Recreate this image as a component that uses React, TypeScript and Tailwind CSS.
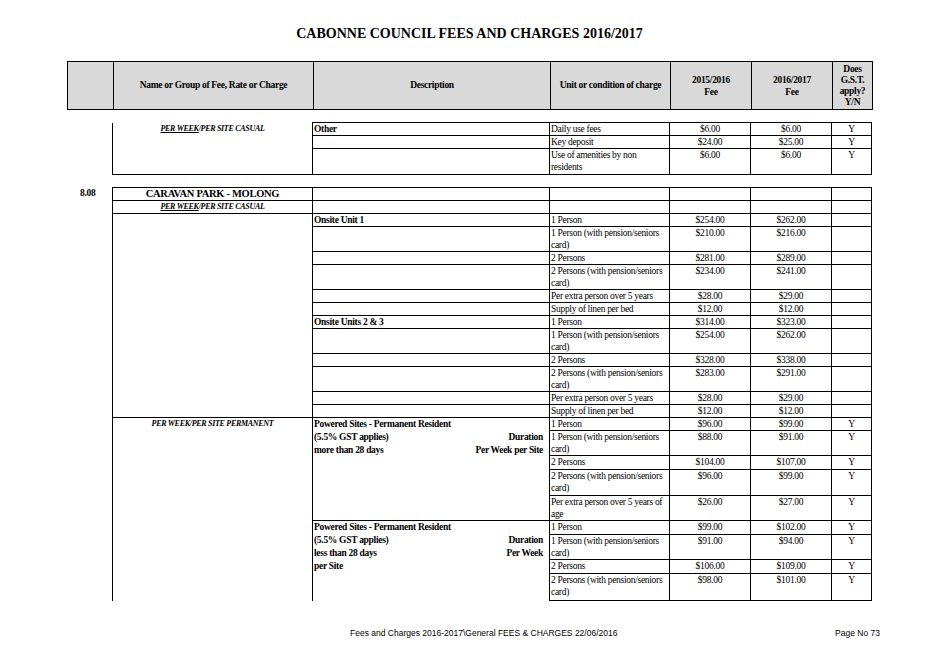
import React from 'react';

const td = 'border border-black px-[1px] align-top leading-[12px] overflow-hidden';
const fee = 'border border-black text-center align-top leading-[12px]';

type R = { d?: string; u: string; a: string; b: string; y?: string; h?: number };

const casual: R[] = [
	{ d: 'Onsite Unit 1', u: '1 Person', a: '$254.00', b: '$262.00' },
	{ u: '1 Person (with pension/seniors card)', a: '$210.00', b: '$216.00', h: 24 },
	{ u: '2 Persons', a: '$281.00', b: '$289.00' },
	{ u: '2 Persons (with pension/seniors card)', a: '$234.00', b: '$241.00', h: 24 },
	{ u: 'Per extra person over 5 years', a: '$28.00', b: '$29.00' },
	{ u: 'Supply of linen per bed', a: '$12.00', b: '$12.00' },
	{ d: 'Onsite Units 2 & 3', u: '1 Person', a: '$314.00', b: '$323.00' },
	{ u: '1 Person (with pension/seniors card)', a: '$254.00', b: '$262.00', h: 24 },
	{ u: '2 Persons', a: '$328.00', b: '$338.00' },
	{ u: '2 Persons (with pension/seniors card)', a: '$283.00', b: '$291.00', h: 24 },
	{ u: 'Per extra person over 5 years', a: '$28.00', b: '$29.00' },
	{ u: 'Supply of linen per bed', a: '$12.00', b: '$12.00' },
];

const perm1: R[] = [
	{ u: '1 Person', a: '$96.00', b: '$99.00', y: 'Y' },
	{ u: '1 Person (with pension/seniors card)', a: '$88.00', b: '$91.00', y: 'Y', h: 24 },
	{ u: '2 Persons', a: '$104.00', b: '$107.00', y: 'Y', h: 14 },
	{ u: '2 Persons (with pension/seniors card)', a: '$96.00', b: '$99.00', y: 'Y', h: 26 },
	{ u: 'Per extra person over 5 years of age', a: '$26.00', b: '$27.00', y: 'Y', h: 24 },
];
const perm2: R[] = [
	{ u: '1 Person', a: '$99.00', b: '$102.00', y: 'Y', h: 14 },
	{ u: '1 Person (with pension/seniors card)', a: '$91.00', b: '$94.00', y: 'Y', h: 24 },
	{ u: '2 Persons', a: '$106.00', b: '$109.00', y: 'Y', h: 14 },
	{ u: '2 Persons (with pension/seniors card)', a: '$98.00', b: '$101.00', y: 'Y', h: 27 },
];

const Cols = () => (
	<colgroup>
		<col className="w-[200px]" />
		<col className="w-[237px]" />
		<col className="w-[120px]" />
		<col className="w-[81px]" />
		<col className="w-[81px]" />
		<col className="w-[40px]" />
	</colgroup>
);

const Unit = ({ r }: { r: R }) => (
	<>
		<td className={td}>{r.u}</td>
		<td className={fee}>{r.a}</td>
		<td className={fee}>{r.b}</td>
		<td className={fee}>{r.y ?? ''}</td>
	</>
);

const Perm = ({ a, b, c }: { a: string; b: string; c?: string }) => (
	<div className="font-bold leading-[13px]">
		<div>Powered Sites - Permanent Resident</div>
		<div className="flex justify-between"><span>(5.5% GST applies)</span><span>Duration</span></div>
		<div className="flex justify-between"><span>{a}</span><span>{b}</span></div>
		{c && <div>{c}</div>}
	</div>
);

export default function App() {
	return (
		<div className="w-[939px] h-[664px] bg-white text-black flex flex-col items-center" style={{ fontFamily: '"Liberation Serif", serif' }}>
			<h1 className="mt-[25px] text-[14px] font-bold leading-[17px]">CABONNE COUNCIL FEES AND CHARGES 2016/2017</h1>

			<div className="w-[805px] mt-[19px] text-[9.5px] tracking-[-0.3px]">
				<table className="w-full table-fixed border-collapse bg-[#d9d9d9] font-bold">
					<colgroup>
						<col className="w-[46px]" />
						<col className="w-[200px]" />
						<col className="w-[237px]" />
						<col className="w-[120px]" />
						<col className="w-[81px]" />
						<col className="w-[81px]" />
						<col className="w-[40px]" />
					</colgroup>
					<tbody>
						<tr className="h-[48px] border border-black">
							<td className="border-r border-black" />
							<td className="border-r border-black text-center">Name or Group of Fee, Rate or Charge</td>
							<td className="border-r border-black text-center">Description</td>
							<td className="border-r border-black text-center">Unit or condition of charge</td>
							<td className="border-r border-black text-center leading-[12px]">2015/2016<br />Fee</td>
							<td className="border-r border-black text-center leading-[12px]">2016/2017<br />Fee</td>
							<td className="text-center leading-[11px]">Does<br />G.S.T.<br />apply?<br />Y/N</td>
						</tr>
					</tbody>
				</table>

				<div className="flex mt-[12px]">
					<div className="w-[46px]" />
					<table className="w-[759px] table-fixed border-collapse">
						<Cols />
						<tbody>
							<tr className="h-[12px]">
								<td rowSpan={3} className="border-l border-b border-black align-top text-center italic font-bold text-[8px] leading-[12px]">
									<span className="underline">PER WEEK</span>/PER SITE CASUAL
								</td>
								<td className={td + ' font-bold'}>Other</td>
								<Unit r={{ u: 'Daily use fees', a: '$6.00', b: '$6.00', y: 'Y' }} />
							</tr>
							<tr className="h-[12px]">
								<td className={td} />
								<Unit r={{ u: 'Key deposit', a: '$24.00', b: '$25.00', y: 'Y' }} />
							</tr>
							<tr className="h-[26px]">
								<td className={td} />
								<Unit r={{ u: 'Use of amenities by non residents', a: '$6.00', b: '$6.00', y: 'Y' }} />
							</tr>
						</tbody>
					</table>
				</div>

				<div className="flex mt-[12px]">
					<div className="w-[46px] pl-[13px] font-bold leading-[12px]">8.08</div>
					<table className="w-[759px] table-fixed border-collapse">
						<Cols />
						<tbody>
							<tr className="h-[12px]">
								<td className={td + ' text-center font-bold text-[10.5px] leading-[11px]'}>CARAVAN PARK - MOLONG</td>
								<td className={td} /><td className={td} /><td className={td} /><td className={td} /><td className={td} />
							</tr>
							<tr className="h-[12px]">
								<td className={td + ' text-center italic font-bold text-[8px]'}><span className="underline">PER WEEK</span>/PER SITE CASUAL</td>
								<td className={td} /><td className={td} /><td className={td} /><td className={td} /><td className={td} />
							</tr>
							{casual.map((r, i) => (
								<tr key={i} style={{ height: r.h ?? 12 }}>
									{i === 0 && <td rowSpan={casual.length} className="border-l border-black" />}
									<td className={td + ' font-bold'}>{r.d ?? ''}</td>
									<Unit r={r} />
								</tr>
							))}
							{perm1.map((r, i) => (
								<tr key={'p' + i} style={{ height: r.h ?? 12 }}>
									{i === 0 && (
										<td rowSpan={perm1.length + perm2.length} className="border-l border-t border-black align-top text-center italic font-bold text-[8px] leading-[12px]">
											PER WEEK/PER SITE PERMANENT
										</td>
									)}
									{i === 0 && (
										<td rowSpan={perm1.length} className={td + ' pr-[6px]'}>
											<Perm a="more than 28 days" b="Per Week per Site" />
										</td>
									)}
									<Unit r={r} />
								</tr>
							))}
							{perm2.map((r, i) => (
								<tr key={'q' + i} style={{ height: r.h ?? 12 }}>
									{i === 0 && (
										<td rowSpan={perm2.length} className="border-x border-t border-black pl-[1px] pr-[6px] align-top">
											<Perm a="less than 28 days" b="Per Week" c="per Site" />
										</td>
									)}
									<Unit r={r} />
								</tr>
							))}
						</tbody>
					</table>
				</div>
			</div>

			<div className="w-[805px] mt-auto mb-[26px] flex text-[8.5px] leading-[10px]" style={{ fontFamily: '"Liberation Sans", sans-serif' }}>
				<span className="ml-[283px]">Fees and Charges 2016-2017\General FEES &amp; CHARGES 22/06/2016</span>
				<span className="ml-auto mr-[-8px]">Page No 73</span>
			</div>
		</div>
	);
}
